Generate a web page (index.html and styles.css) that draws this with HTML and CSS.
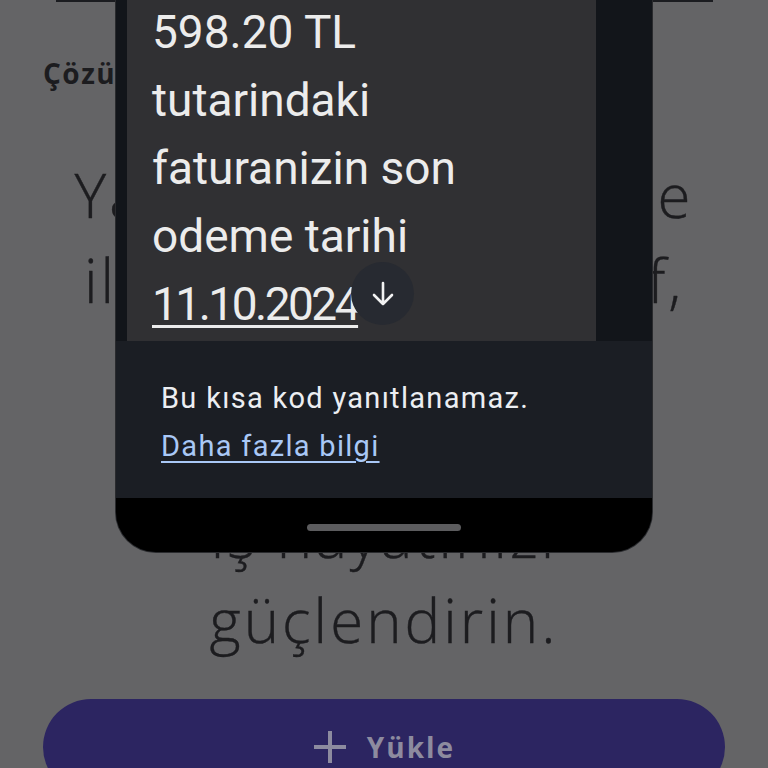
FILE: index.html
```html
<!DOCTYPE html>
<html lang="tr">
<head>
<meta charset="utf-8">
<title>Yükle</title>
<link rel="stylesheet" href="styles.css">
</head>
<body>
<div class="page">
  <div class="topbar"></div>
  <div class="section-label">Çözümler</div>
  <h1 class="hero">
    <span class="hero-line tight">Yapay zekâ sayesinde</span>
    <span class="hero-line loose">ileri görüşlü hedef,</span>
    <span class="hero-line">güçlü bir profil</span>
    <span class="hero-line">oluşturarak</span>
    <span class="hero-line">iş hayatınızı</span>
    <span class="hero-line">güçlendirin.</span>
  </h1>
  <button class="upload-btn" type="button">
    <svg class="plus" width="34" height="34" viewBox="0 0 34 34" aria-hidden="true"><path d="M17 1v32M1 17h32" stroke="currentColor" stroke-width="4" fill="none"/></svg>
    <span>Yükle</span>
  </button>
</div>

<div class="sms-sheet">
  <div class="thread">
    <div class="bubble">
      <p class="msg">598.20 TL<br>tutarindaki<br>faturanizin son<br>odeme tarihi<br><span class="date">11.10.2024</span></p>
      <div class="scroll-down">
        <svg width="26" height="28" viewBox="0 0 26 28" aria-hidden="true"><path d="M13 3v21M4 15l9 9 9-9" stroke="#f2f2f2" stroke-width="2.6" fill="none" stroke-linecap="round" stroke-linejoin="round"/></svg>
      </div>
    </div>
  </div>
  <div class="sheet-footer">
    <p class="note">Bu kısa kod yanıtlanamaz.</p>
    <a class="more" href="#">Daha fazla bilgi</a>
  </div>
  <div class="nav-bar"><div class="home-indicator"></div></div>
</div>
</body>
</html>
```

FILE: styles.css
```css
html, body {
  margin: 0;
  padding: 0;
}
body {
  background: #646466;
  width: 768px;
  height: 768px;
  overflow: hidden;
  position: relative;
  font-family: "Open Sans", "Noto Sans", sans-serif;
}
.page {
  padding: 0 43px;
}
.topbar {
  height: 2px;
  margin: 0 12px 0 13px;
  background: #1b1c20;
}
.section-label {
  margin-top: 57px;
  font-family: "Open Sans", sans-serif;
  font-weight: 700;
  font-size: 28px;
  letter-spacing: 1.5px;
  line-height: 28px;
  color: #1c1c1f;
  white-space: nowrap;
}
.hero {
  margin: 66px 0 0;
  font-family: "Open Sans", sans-serif;
  font-weight: 300;
  font-size: 60px;
  letter-spacing: 3px;
  line-height: 85px;
  color: #1c1c1f;
  text-align: center;
  -webkit-text-stroke: 0.4px #1c1c1f;
}
.hero-line {
  display: block;
  white-space: nowrap;
}
.hero-line.tight {
  word-spacing: -9px;
}
.hero-line.loose {
  word-spacing: 21px;
}
.upload-btn {
  margin-top: 36px;
  width: 100%;
  height: 96px;
  border: 0;
  border-radius: 48px;
  background: #2c2561;
  color: #8d8b9f;
  display: flex;
  align-items: flex-start;
  justify-content: center;
  gap: 20px;
  padding-top: 31px;
  font-family: "Open Sans", sans-serif;
  font-weight: 700;
  font-size: 28px;
  letter-spacing: 2px;
}
.upload-btn span {
  line-height: 34px;
}

/* SMS bottom sheet overlay */
.sms-sheet {
  position: absolute;
  left: 116px;
  top: -40px;
  width: 536px;
  background: #12151a;
  border-radius: 0 0 40px 40px;
  overflow: hidden;
  font-family: "Roboto", sans-serif;
  box-shadow: 0 0 0 1px #2a2b2e;
}
.thread {
  padding: 0 56px 0 11px;
}
.bubble {
  position: relative;
  background: #303033;
  padding: 38px 0 3px 25px;
}
.msg {
  margin: 0;
  font-size: 46px;
  line-height: 68px;
  color: #ececec;
}
.date {
  letter-spacing: -2.5px;
  text-decoration: underline;
  text-decoration-thickness: 3px;
  text-underline-offset: 5px;
}
.scroll-down {
  position: absolute;
  left: 224px;
  top: 302px;
  width: 63px;
  height: 63px;
  border-radius: 50%;
  background: #272a31;
  display: flex;
  align-items: center;
  justify-content: center;
}
.sheet-footer {
  background: #1b1e24;
  height: 157px;
  padding: 33px 45px 0;
  box-sizing: border-box;
}
.note {
  margin: 0;
  font-size: 29px;
  letter-spacing: 1.3px;
  line-height: 48px;
  color: #eceef2;
}
.more {
  display: inline-block;
  font-size: 29px;
  letter-spacing: 1.3px;
  line-height: 48px;
  color: #a9c8f6;
  text-decoration: underline;
  text-decoration-thickness: 2px;
  text-underline-offset: 5px;
}
.nav-bar {
  height: 54px;
  background: #000;
  display: flex;
  justify-content: center;
  padding-top: 26px;
  box-sizing: border-box;
}
.home-indicator {
  width: 154px;
  height: 7px;
  border-radius: 4px;
  background: #5c5c5e;
}
```
